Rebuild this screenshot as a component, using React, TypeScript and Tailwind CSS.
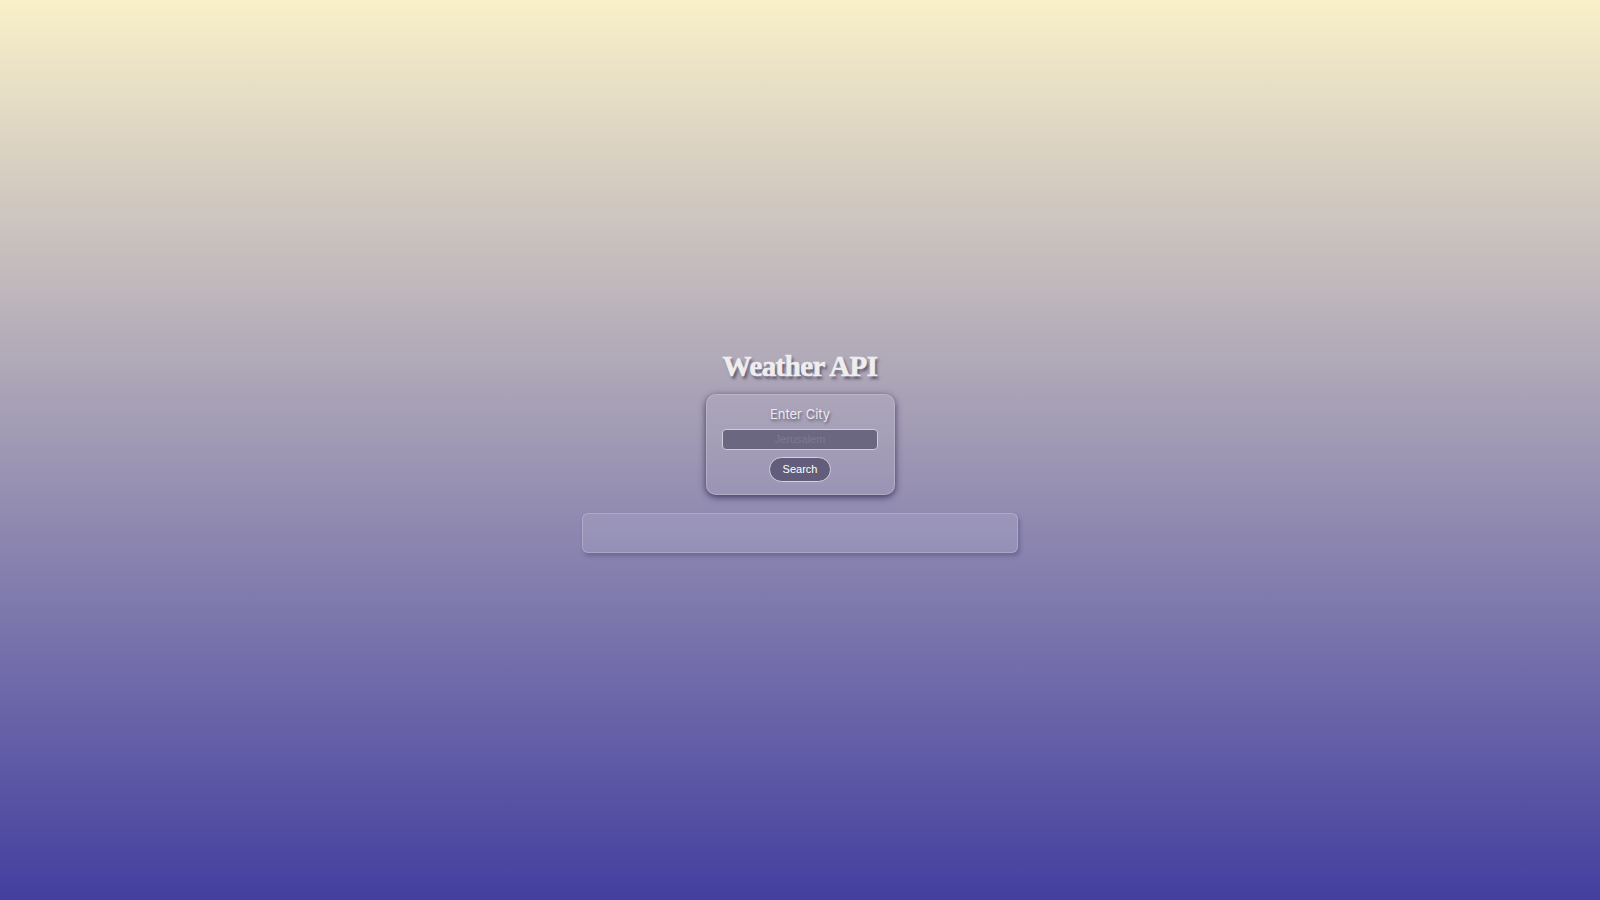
import React from 'react'

const App = () => {
  return (
    <div className="min-h-screen w-full bg-linear-to-b/srgb from-[#f9f0c9] to-[#433f9f] flex flex-col items-center justify-center font-['Inter',sans-serif]">
      {/* Title */}
      <h1 className="mt-[4px] text-[29px] leading-none font-bold text-[#eeeeee] tracking-[-0.6px] font-['Liberation_Serif',serif] [text-shadow:2px_3px_3px_rgba(40,30,60,0.6)] [-webkit-text-stroke:0.6px_#eeeeee]">
        Weather API
      </h1>

      {/* Search card */}
      <div className="mt-[13px] w-[189px] h-[101px] rounded-[10px] border border-[#c9c4d6]/50 bg-white/5 shadow-[0_2px_7px_rgba(40,30,70,0.8)] flex flex-col items-center pt-[12px]">
        <label className="text-[13px] leading-[14px] text-[#ecebf0] [text-shadow:1px_2px_3px_rgba(40,30,60,0.6)]">
          Enter City
        </label>
        <input
          placeholder="Jerusalem"
          className="mt-[8px] w-[156px] h-[21px] rounded-[4px] border border-[#d0ccd8] bg-[#6c6780] text-center text-[11px] text-white placeholder:text-[#7e7992] outline-none font-['Liberation_Sans',sans-serif]"
        />
        <button className="mt-[7px] w-[62px] h-[25px] rounded-full border border-[#d4d0dc] bg-[#625d7b] text-[11px] text-white font-['Liberation_Sans',sans-serif]">
          Search
        </button>
      </div>

      {/* Result panel */}
      <div className="mt-[18px] w-[436px] h-[40px] rounded-[6px] border border-white/20 bg-white/10 shadow-[2px_3px_4px_rgba(60,50,110,0.35)]" />
    </div>
  )
}

export default App
